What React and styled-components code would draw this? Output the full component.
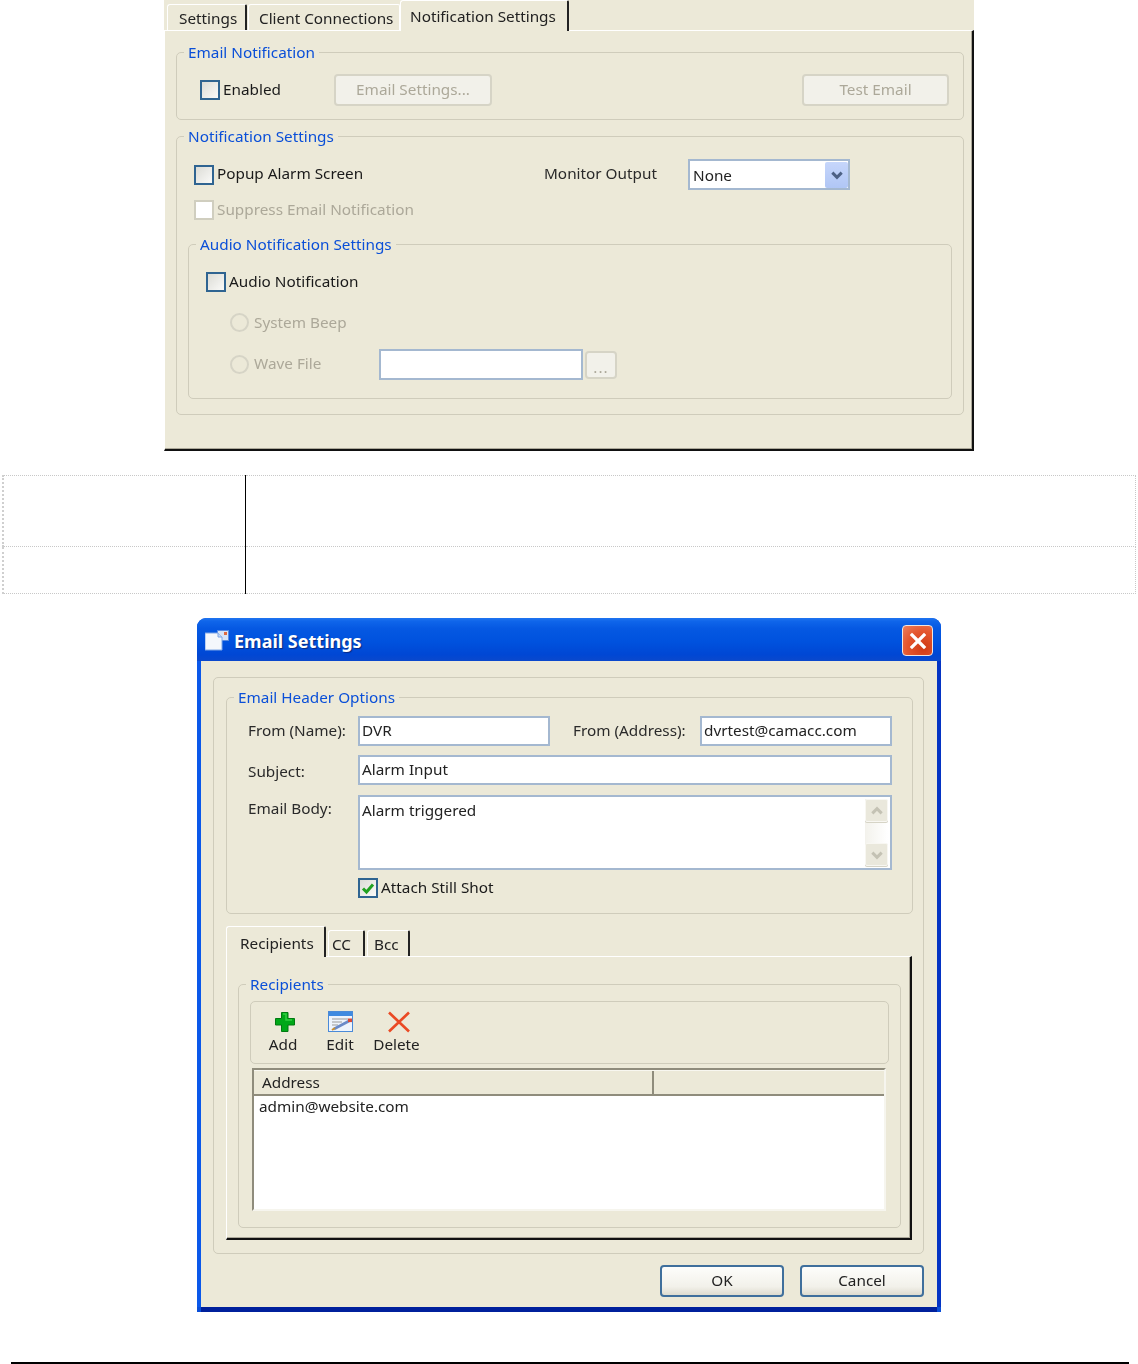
import React from "react";
import styled, { createGlobalStyle } from "styled-components";

const Global = createGlobalStyle`
  html, body { margin: 0; padding: 0; background: #fff; }
  body { font-family: "Noto Sans", "Liberation Sans", sans-serif; font-size: 15.3px; color: #1a1a1a; }
  * { box-sizing: border-box; }
`;

const Page = styled.div`
  width: 1138px;
  height: 1364px;
  overflow: hidden;
  display: flex;
  flex-direction: column;
`;

const Shot = styled.div`
  filter: blur(0.3px);
  background: #ece9d8;
`;

const SettingsWindow = styled(Shot)`
  width: 810px;
  height: 451px;
  margin-left: 164px;
  display: flex;
  flex-direction: column;
`;

const TabStrip = styled.div`
  display: flex;
  align-items: flex-end;
  height: 30px;
  margin-top: ${(p) => p.$mt || 0}px;
  padding-left: ${(p) => p.$left}px;
  gap: ${(p) => p.$gap}px;
  position: relative;
  z-index: 1;
  flex: none;
`;

const Tab = styled.div`
  flex: none;
  width: ${(p) => p.$w}px;
  height: ${(p) => p.$h}px;
  padding-left: ${(p) => p.$pad}px;
  padding-top: ${(p) => p.$top}px;
  margin-bottom: ${(p) => (p.$active ? "-1px" : "0")};
  margin-right: ${(p) => p.$mr || 0}px;
  background: #ece9d8;
  border-top: 1px solid #fff;
  border-left: 1px solid #fff;
  border-right: ${(p) => (p.$open ? "1px solid #fff" : "2px solid #222")};
  border-top-left-radius: 3px;
  border-top-right-radius: 2px;
  line-height: 22px;
  white-space: nowrap;
  color: #222;
`;

const TabBody = styled.div`
  flex: 1;
  border-top: 1px solid #fff;
  border-left: 1px solid #fff;
  border-right: 2px solid #111;
  border-bottom: 2px solid #111;
  box-shadow: inset -1px -1px 0 #aca899;
  padding: ${(p) => p.$pad};
`;

const Group = styled.fieldset`
  margin: ${(p) => p.$m || 0};
  padding: ${(p) => p.$pad || 0};
  border: 1px solid #cfccbb;
  border-radius: 5px;
  min-width: 0;
  width: ${(p) => p.$w}px;
  height: ${(p) => p.$h}px;
`;

const Legend = styled.legend`
  margin-left: ${(p) => 7 - (p.$inset || 0)}px;
  padding: 0 4px;
  height: 18px;
  line-height: 18px;
  color: #0a4fd8;
  white-space: nowrap;
`;

const Row = styled.div`
  display: grid;
  grid-template-columns: ${(p) => p.$cols};
  align-items: center;
  margin-top: ${(p) => p.$mt || 0}px;
  padding-left: ${(p) => p.$left || 0}px;
  padding-right: ${(p) => p.$right || 0}px;
`;

const CheckLabel = styled.div`
  display: flex;
  align-items: center;
  gap: 3px;
  height: 20px;
  white-space: nowrap;
  color: ${(p) => (p.$off ? "#aca899" : "#1a1a1a")};
`;

const CheckText = styled.span`
  margin-top: -3px;
`;

const Box = styled.span`
  width: 20px;
  height: 20px;
  flex: none;
  display: flex;
  align-items: center;
  justify-content: center;
  border: 2px solid ${(p) => (p.$off ? "#d0cebf" : "#2f6491")};
  background: ${(p) => (p.$off ? "#fff" : "linear-gradient(135deg,#dcdcd6,#fafaf8)")};
`;

const RadioDot = styled.span`
  width: 19px;
  height: 19px;
  flex: none;
  border-radius: 50%;
  border: 2px solid #d6d4c6;
  background: #ece9d8;
  margin-right: 2px;
`;

const PlainLabel = styled.div`
  white-space: nowrap;
  color: #2a2a2a;
  align-self: ${(p) => p.$align || "center"};
  margin-top: ${(p) => p.$top || 0}px;
  margin-bottom: ${(p) => p.$bottom || 0}px;
  margin-left: ${(p) => p.$ml || 0}px;
`;

const Btn = styled.div`
  flex: none;
  height: ${(p) => p.$h || 32}px;
  width: ${(p) => p.$w}px;
  padding-bottom: 3px;
  display: flex;
  align-items: center;
  justify-content: center;
  border-radius: 4px;
  border: 2px solid ${(p) => (p.$off ? "#d6d4c6" : "#3f6f9c")};
  background: ${(p) => (p.$off ? "#f2f1ea" : "linear-gradient(#fdfdfb,#f2f1ea 70%,#dedccf)")};
  color: ${(p) => (p.$off ? "#aca899" : "#222")};
  white-space: nowrap;
`;

const Field = styled.div`
  flex: none;
  height: ${(p) => p.$h || 30}px;
  width: ${(p) => p.$w}px;
  background: #fff;
  border: 2px solid #a4b8d0;
  padding: 0 2px 2px;
  display: flex;
  align-items: ${(p) => (p.$top ? "flex-start" : "center")};
  justify-content: space-between;
  line-height: 24px;
  color: #222;
  white-space: nowrap;
`;

const Combo = styled(Field)`
  height: 31px;
  width: 162px;
  padding: 2px 0 0 3px;
  align-items: center;
`;

const ComboText = styled.span`
  margin-top: -1px;
`;

const ComboButton = styled.span`
  width: 23px;
  height: 26px;
  margin-top: -2px;
  background: linear-gradient(#c6d6fb, #b0c6f5);
  border-radius: 2px;
  display: flex;
  align-items: center;
  justify-content: center;
`;

const BodyText = styled.span`
  padding-top: 1px;
`;

const ScrollBar = styled.div`
  width: 23px;
  height: 67px;
  margin: 2px 0 0 0;
  display: flex;
  flex-direction: column;
  justify-content: space-between;
  background: linear-gradient(90deg, #f3f2ec, #fff);
`;

const ScrollBtn = styled.span`
  height: 23px;
  background: #eae8dc;
  border: 1px solid #f8f7f2;
  border-radius: 2px;
  box-shadow: 0 1px 0 #d6d4c6;
  display: flex;
  align-items: center;
  justify-content: center;
`;

const Dots = styled.span`
  color: #aca899;
  line-height: 15px;
  padding-top: 8px;
  letter-spacing: 1px;
`;

const WaveRow = styled.div`
  display: flex;
  align-items: center;
  margin-top: 17px;
  margin-left: 24px;
  gap: 2px;
`;

const RadioCell = styled(CheckLabel)`
  width: 147px;
  flex: none;
`;

const RadioRow = styled.div`
  margin-top: 20px;
  margin-left: 24px;
`;

const DataTable = styled.table`
  width: 1134px;
  height: 119px;
  margin: 24px 0 0 2px;
  border-collapse: collapse;
  table-layout: fixed;
`;

const Cell = styled.td`
  height: ${(p) => p.$h}px;
  padding: 0;
  border: 1px dotted #c8c8c8;
`;

const LeadCell = styled(Cell)`
  width: 242px;
  border-left: 2px dotted #cfcfcf;
  border-right: 1px solid #000;
`;

const Dialog = styled(Shot)`
  width: 744px;
  height: 694px;
  margin: 24px 0 0 197px;
  border-radius: 9px 9px 0 0;
  overflow: hidden;
  display: flex;
  flex-direction: column;
  background: #0a4fd8;
`;

const TitleBar = styled.div`
  height: 43px;
  flex: none;
  display: flex;
  align-items: center;
  padding: 2px 8px 0 8px;
  background: linear-gradient(#1f74f0 0, #0f65ea 8%, #0558e2 25%, #0052de 55%, #0047d4 85%, #0a48cc 100%);
`;

const TitleText = styled.div`
  flex: 1;
  margin-left: 5px;
  padding-top: 1px;
  color: #fff;
  font-weight: 700;
  font-size: 18px;
  text-shadow: 1px 1px 1px #0a2a80;
  white-space: nowrap;
`;

const CloseBtn = styled.div`
  width: 31px;
  height: 31px;
  border: 1px solid #f0e6e0;
  border-radius: 4px;
  background: radial-gradient(circle at 70% 75%, #d03a14, #e4562e 55%, #ec7f5d 100%);
  display: flex;
  align-items: center;
  justify-content: center;
`;

const DialogFrame = styled.div`
  flex: 1;
  background: #ece9d8;
  margin: 0 4px 5px 4px;
  padding: 16px 13px 0 12px;
  display: flex;
  flex-direction: column;
  box-shadow: -4px 0 0 #0a58ea, 4px 0 0 #0434c4, 0 5px 0 #00209c;
`;

const OuterBox = styled.div`
  height: 577px;
  border: 1px solid #cfccbb;
  border-radius: 5px;
  padding: 10px 11px 13px 12px;
  display: flex;
  flex-direction: column;
`;

const Toolbar = styled.div`
  width: 639px;
  height: 63px;
  margin-top: 8px;
  border: 1px solid #cfccbb;
  border-radius: 5px;
  padding: 8px 0 0 17px;
  display: flex;
`;

const ToolItem = styled.div`
  width: ${(p) => p.$w}px;
  margin-left: ${(p) => p.$ml || 0}px;
  display: flex;
  flex-direction: column;
  align-items: center;
  color: #222;
`;

const ToolIcon = styled.span`
  height: 24px;
  display: flex;
  align-items: center;
  transform: translateX(${(p) => p.$dx || 0}px);
`;

const ToolText = styled.span`
  line-height: 20px;
  white-space: nowrap;
`;

const ListView = styled.div`
  width: 634px;
  height: 143px;
  margin: 4px 0 0 2px;
  background: #fff;
  border-style: solid;
  border-width: 2px;
  border-color: #8f8c7c #f6f5ee #f6f5ee #8f8c7c;
`;

const ListHeader = styled.div`
  display: grid;
  grid-template-columns: 400px 1fr;
  height: 26px;
  background: #ece9d8;
  border-top: 1px solid #f8f7f0;
  border-bottom: 2px solid #8f8c7c;
  line-height: 22px;
`;

const HeadCell = styled.div`
  padding-left: ${(p) => p.$pad || 0}px;
  border-right: ${(p) => (p.$sep ? "2px solid #8f8c7c" : "0")};
  color: #222;
`;

const ListRow = styled.div`
  padding-left: 5px;
  line-height: 20px;
  color: #222;
`;

const Footer = styled.div`
  display: flex;
  justify-content: flex-end;
  gap: 16px;
  margin-top: 11px;
`;

const PageRule = styled.div`
  width: 1118px;
  height: 2px;
  margin: 50px 0 0 11px;
  background: #000;
  flex: none;
`;

const Check = () => (
  <svg width="14" height="13" viewBox="0 0 14 13">
    <path d="M2 6.5 L5.5 10 L12 2.5" fill="none" stroke="#21a121" strokeWidth="3" />
  </svg>
);

const Chevron = ({ dir = "down", color = "#4d6185", size = 14 }) => (
  <svg width={size} height={size} viewBox="0 0 12 12">
    <path
      d={dir === "down" ? "M2 4 L6 8 L10 4" : "M2 8 L6 4 L10 8"}
      fill="none"
      stroke={color}
      strokeWidth="2.6"
    />
  </svg>
);

const WindowIcon = () => (
  <svg width="24" height="21" viewBox="0 0 24 21" style={{ flex: "none" }}>
    <rect x="12" y="0" width="12" height="11" fill="#5a8ae0" />
    <rect x="13" y="1" width="10" height="9" fill="#d7e4f7" />
    <rect x="19" y="2" width="3" height="3" fill="#e06a40" />
    <path d="M0 3 H13 L17 7 V20 H0 Z" fill="#f4f7fc" stroke="#7ea6e6" />
    <path d="M13 3 V7 H17" fill="#c8d8f2" stroke="#7ea6e6" />
  </svg>
);

const CloseX = () => (
  <svg width="18" height="18" viewBox="0 0 18 18">
    <path d="M3 3 L15 15 M15 3 L3 15" stroke="#fff" strokeWidth="3.2" strokeLinecap="square" />
  </svg>
);

const PlusIcon = () => (
  <svg width="22" height="22" viewBox="0 0 22 22">
    <path
      d="M7.5 1.5 H14 V7.5 H20.5 V14 H14 V20.5 H7.5 V14 H1.5 V7.5 H7.5 Z"
      fill="#00a818"
      stroke="#007a10"
      strokeLinejoin="round"
    />
    <path d="M9 3 H12 V9 H18" fill="none" stroke="#30d040" strokeWidth="1.5" />
  </svg>
);

const EditIcon = () => (
  <svg width="26" height="22" viewBox="0 0 26 22">
    <rect x="0.5" y="0.5" width="24" height="20" fill="#eef4fc" stroke="#4a8ad8" />
    <rect x="1" y="1" width="23" height="4" fill="#3f8ae0" />
    <path d="M4 8 H20 M4 11 H14 M4 14 H10" stroke="#9a9a9a" strokeWidth="1" />
    <path d="M6 18 L21 10" stroke="#6a8ac8" strokeWidth="2.6" />
    <rect x="20" y="7.5" width="4" height="3.6" fill="#d84a38" />
    <path d="M4 19 L7 17" stroke="#c89030" strokeWidth="2" />
  </svg>
);

const DeleteIcon = () => (
  <svg width="24" height="22" viewBox="0 0 24 22">
    <path d="M2 1.5 L22 20.5 M22 1.5 L2 20.5" stroke="#ea4a24" strokeWidth="2.6" />
  </svg>
);

export default function App() {
  return (
    <Page>
      <Global />
      <SettingsWindow>
        <TabStrip $left={3} $gap={0}>
          <Tab $w={80} $h={26} $pad={11} $top={2} $mr={1}>Settings</Tab>
          <Tab $w={152} $h={26} $pad={10} $top={2} $open>Client Connections</Tab>
          <Tab $w={169} $h={31} $pad={9} $top={4} $active>Notification Settings</Tab>
        </TabStrip>
        <TabBody $pad="12px 8px 0 11px">
          <Group $w={788} $h={77}>
            <Legend>Email Notification</Legend>
            <Row $cols="134px 158px 1fr 147px" $mt={13} $left={23} $right={14}>
              <CheckLabel><Box /><CheckText>Enabled</CheckText></CheckLabel>
              <Btn $off>Email Settings...</Btn>
              <span />
              <Btn $off>Test Email</Btn>
            </Row>
          </Group>
          <Group $w={788} $h={288} $m="7px 0 0" $pad="0 11px 0 11px">
            <Legend $inset={11}>Notification Settings</Legend>
            <Row $cols="350px 144px 162px" $mt={14} $left={6}>
              <CheckLabel><Box /><CheckText>Popup Alarm Screen</CheckText></CheckLabel>
              <PlainLabel $bottom={4}>Monitor Output</PlainLabel>
              <Combo>
                <ComboText>None</ComboText>
                <ComboButton><Chevron /></ComboButton>
              </Combo>
            </Row>
            <Row $cols="1fr" $mt={10} $left={6}>
              <CheckLabel $off><Box $off /><CheckText>Suppress Email Notification</CheckText></CheckLabel>
            </Row>
            <Group $w={764} $h={164} $m="15px 0 0" $pad="0 0 0 17px">
              <Legend $inset={17}>Audio Notification Settings</Legend>
              <Row $cols="1fr" $mt={19}>
                <CheckLabel><Box /><CheckText>Audio Notification</CheckText></CheckLabel>
              </Row>
              <RadioRow>
                <CheckLabel $off><RadioDot />System Beep</CheckLabel>
              </RadioRow>
              <WaveRow>
                <RadioCell $off><RadioDot /><CheckText>Wave File</CheckText></RadioCell>
                <Field $w={204} $h={31} />
                <Btn $off $w={32} $h={28}><Dots>...</Dots></Btn>
              </WaveRow>
            </Group>
          </Group>
        </TabBody>
      </SettingsWindow>

      <DataTable>
        <tbody>
          <tr><LeadCell $h={71} /><Cell $h={71} /></tr>
          <tr><LeadCell $h={47} /><Cell $h={47} /></tr>
        </tbody>
      </DataTable>

      <Dialog>
        <TitleBar>
          <WindowIcon />
          <TitleText>Email Settings</TitleText>
          <CloseBtn><CloseX /></CloseBtn>
        </TitleBar>
        <DialogFrame>
          <OuterBox>
            <Group $w={687} $h={226} $pad="0 0 0 21px">
              <Legend $inset={21}>Email Header Options</Legend>
              <Row $cols="110px 192px 150px 192px" $mt={10}>
                <PlainLabel $bottom={3}>From (Name):</PlainLabel>
                <Field>DVR</Field>
                <PlainLabel $ml={23} $bottom={3}>From (Address):</PlainLabel>
                <Field>dvrtest@camacc.com</Field>
              </Row>
              <Row $cols="110px 534px" $mt={9}>
                <PlainLabel $top={1}>Subject:</PlainLabel>
                <Field>Alarm Input</Field>
              </Row>
              <Row $cols="110px 534px" $mt={10}>
                <PlainLabel $align="start" $top={3}>Email Body:</PlainLabel>
                <Field $h={75} $top>
                  <BodyText>Alarm triggered</BodyText>
                  <ScrollBar>
                    <ScrollBtn><Chevron dir="up" color="#c4c2b4" /></ScrollBtn>
                    <ScrollBtn><Chevron color="#c4c2b4" /></ScrollBtn>
                  </ScrollBar>
                </Field>
              </Row>
              <Row $cols="1fr" $mt={8} $left={110}>
                <CheckLabel><Box><Check /></Box><CheckText>Attach Still Shot</CheckText></CheckLabel>
              </Row>
            </Group>

            <TabStrip $left={0} $gap={2} $mt={12}>
              <Tab $w={100} $h={31} $pad={13} $top={5} $active>Recipients</Tab>
              <Tab $w={37} $h={26} $pad={3} $top={2}>CC</Tab>
              <Tab $w={43} $h={26} $pad={6} $top={2}>Bcc</Tab>
            </TabStrip>
            <TabBody $pad="18px 0 0 11px">
              <Group $w={663} $h={253} $pad="0 0 0 11px">
                <Legend $inset={11}>Recipients</Legend>
                <Toolbar>
                  <ToolItem $w={30}>
                    <ToolIcon $dx={2}><PlusIcon /></ToolIcon>
                    <ToolText>Add</ToolText>
                  </ToolItem>
                  <ToolItem $w={28} $ml={28}>
                    <ToolIcon $dx={1}><EditIcon /></ToolIcon>
                    <ToolText>Edit</ToolText>
                  </ToolItem>
                  <ToolItem $w={47} $ml={19}>
                    <ToolIcon $dx={2}><DeleteIcon /></ToolIcon>
                    <ToolText>Delete</ToolText>
                  </ToolItem>
                </Toolbar>
                <ListView>
                  <ListHeader>
                    <HeadCell $pad={8} $sep>Address</HeadCell>
                    <HeadCell />
                  </ListHeader>
                  <ListRow>admin@website.com</ListRow>
                </ListView>
              </Group>
            </TabBody>
          </OuterBox>
          <Footer>
            <Btn $w={124}>OK</Btn>
            <Btn $w={124}>Cancel</Btn>
          </Footer>
        </DialogFrame>
      </Dialog>

      <PageRule />
    </Page>
  );
}
